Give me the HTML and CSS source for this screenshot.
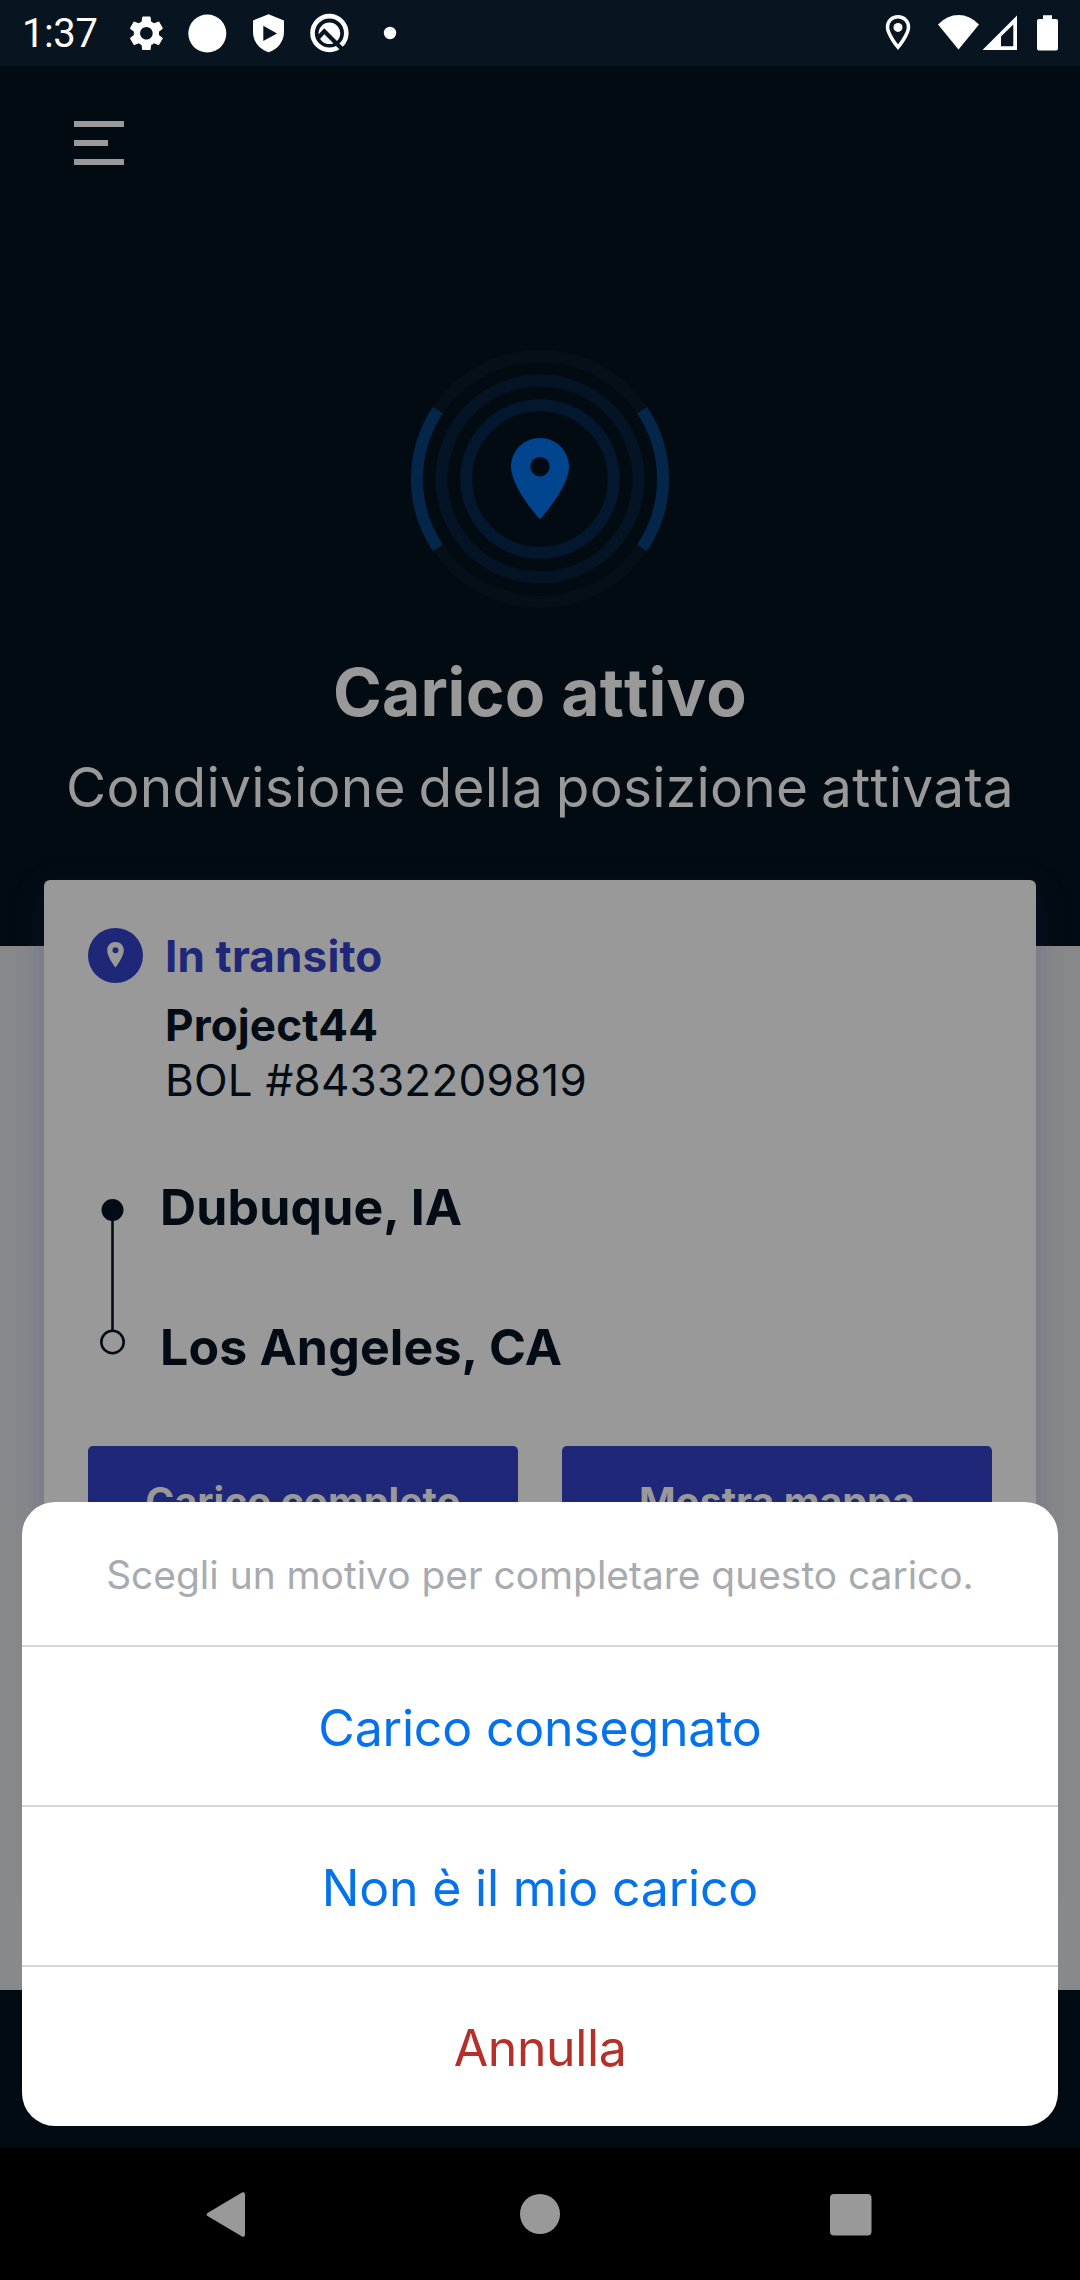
FILE: index.html
```html
<!DOCTYPE html>
<html lang="it">
<head>
<meta charset="utf-8">
<title>Carico attivo</title>
<link rel="stylesheet" href="styles.css">
</head>
<body>
<div class="screen">
  <header class="status">
    <span class="clock">1:37</span>
    <svg class="status-left" viewBox="120 0 300 66" width="300" height="66" fill="#fff">
      <path transform="translate(125.4 12.3) scale(1.75)" d="M19.14 12.94c.04-.3.06-.61.06-.94 0-.32-.02-.64-.07-.94l2.03-1.58c.18-.14.23-.41.12-.61l-1.92-3.32c-.12-.22-.37-.29-.59-.22l-2.39.96c-.5-.38-1.03-.7-1.62-.94l-.36-2.54c-.04-.24-.24-.41-.48-.41h-3.84c-.24 0-.43.17-.47.41l-.36 2.54c-.59.24-1.13.57-1.62.94l-2.39-.96c-.22-.08-.47 0-.59.22L2.74 8.87c-.12.21-.08.47.12.61l2.03 1.58c-.05.3-.09.63-.09.94s.02.64.07.94l-2.03 1.58c-.18.14-.23.41-.12.61l1.92 3.32c.12.22.37.29.59.22l2.39-.96c.5.38 1.03.7 1.62.94l.36 2.54c.05.24.24.41.48.41h3.84c.24 0 .44-.17.47-.41l.36-2.54c.59-.24 1.13-.56 1.62-.94l2.39.96c.22.08.47 0 .59-.22l1.92-3.32c.12-.22.07-.47-.12-.61l-2.01-1.58zM12 15.6c-1.98 0-3.6-1.62-3.6-3.6s1.62-3.6 3.6-3.6 3.6 1.62 3.6 3.6-1.62 3.6-3.6 3.6z"/>
      <circle cx="207.3" cy="33.5" r="19"/>
      <path fill-rule="evenodd" d="M268.500 14.300L284 20.500V32C284 41.500 277.500 49.500 268.500 52.300C259.500 49.500 253 41.500 253 32V20.500ZM263.300 25.800V41L277 33.400Z"/>
      <circle cx="329.400" cy="33" r="16.900" fill="none" stroke="#fff" stroke-width="4.600"/>
      <circle cx="329.400" cy="33.300" r="10.800"/>
      <path d="M318.500 37.500L324.300 31.200L343 50" fill="none" stroke="#081520" stroke-width="4.200"/>
      <circle cx="390" cy="33" r="6.200"/>
    </svg>
    <svg class="status-right" viewBox="880 0 200 66" width="200" height="66" fill="#fff">
      <path d="M898 16.800C891.600 16.800 887.500 21.600 887.500 27.300C887.500 34.500 898 47.200 898 47.200S908.500 34.500 908.500 27.300C908.500 21.600 904.400 16.800 898 16.800Z" fill="none" stroke="#fff" stroke-width="3.500"/>
      <circle cx="898" cy="27.400" r="4.500"/>
      <path d="M938 24.500Q947 15 958.500 15T979 24.500L958.500 49.500Z"/>
      <path fill-rule="evenodd" d="M1017 15.500V50H982.500ZM1013.300 24.500L1001 36.500V46.300H1013.300Z"/>
      <path d="M1043 15.300H1052V19H1056Q1058 19 1058 21V48.500Q1058 50.500 1056 50.500H1039Q1037 50.500 1037 48.500V21Q1037 19 1039 19H1043Z"/>
    </svg>
  </header>

  <section class="hero">
    <div class="menu"><i></i><i class="short"></i><i></i></div>
    <svg class="radar" viewBox="-130 -130 260 260" width="260" height="260" fill="none" stroke-width="12">
      <circle r="123" stroke="#040f18"/>
      <circle r="98.500" stroke="#041425"/>
      <circle r="73.800" stroke="#03182f"/>
      <path d="M-102 -68.800A123 123 0 0 0 -102 68.800M102 -68.800A123 123 0 0 1 102 68.800" stroke="#04264a"/>
      <path fill="#00458e" fill-rule="evenodd" d="M0 -41C-16 -41 -29 -28.300 -29 -12.500C-29 8.900 0 40.300 0 40.300S29 8.900 29 -12.500C29 -28.300 16 -41 0 -41ZM0 -22A9.700 9.700 0 1 1 0 -2.600A9.700 9.700 0 1 1 0 -22Z"/>
    </svg>
    <h1>Carico attivo</h1>
    <p>Condivisione della posizione attivata</p>
  </section>

  <main class="body">
    <article class="card">
      <div class="load">
        <svg width="55" height="55" viewBox="0 0 55 55"><circle cx="27.500" cy="27.500" r="27.500" fill="#1e2778"/><path fill="#999" fill-rule="evenodd" d="M27.500 14C22.800 14 19.200 17.500 19.200 22.200C19.200 29 27.500 39.500 27.500 39.500S35.800 29 35.800 22.200C35.800 17.500 32.200 14 27.500 14ZM27.500 19.200A3 3 0 1 1 27.500 25.200A3 3 0 1 1 27.500 19.200Z"/></svg>
        <div class="load-text">
          <div class="state">In transito</div>
          <div class="company">Project44</div>
          <div class="bol">BOL #84332209819</div>
        </div>
      </div>
      <div class="route">
        <svg width="26" height="170" viewBox="0 0 26 170"><g stroke="#030c14" stroke-width="2.600" fill="none"><circle cx="12.500" cy="15" r="9.700" fill="#030c14"/><path d="M12.500 15V135.500"/><circle cx="12.500" cy="147" r="11.200"/></g></svg>
        <div class="stops"><div>Dubuque, IA</div><div>Los Angeles, CA</div></div>
      </div>
      <div class="actions"><button>Carico completo</button><button>Mostra mappa</button></div>
    </article>
  </main>
  <div class="tabbar"></div>

  <nav class="nav">
    <svg width="1080" height="132" viewBox="0 2148 1080 132" fill="#999">
      <path d="M207.500 2213Q205.500 2214.500 207.500 2216L242 2236.500Q245 2237.500 245 2234.500V2194.500Q245 2191.500 242 2192.500Z"/>
      <circle cx="540" cy="2214" r="20"/>
      <rect x="830" y="2194" width="41.500" height="41.500" rx="4"/>
    </svg>
  </nav>

  <div class="sheet">
    <div class="sheet-title">Scegli un motivo per completare questo carico.</div>
    <div class="option">Carico consegnato</div>
    <div class="option">Non è il mio carico</div>
    <div class="option cancel">Annulla</div>
  </div>
</div>
</body>
</html>
```
FILE: styles.css
```css
* { box-sizing: border-box; }
body { margin: 0; background: #000; font-family: Inter, sans-serif; }
svg { display: block; flex: none; }
.screen { position: relative; width: 1080px; height: 2280px; display: flex; flex-direction: column; overflow: hidden; }

.status { height: 66px; background: #081520; display: flex; color: #fff; }
.clock { width: 120px; padding-left: 22px; font: 40px/68px Roboto, sans-serif; letter-spacing: -.4px; }
.status-right { margin-left: auto; }

.hero { height: 880px; background: #030b12; color: #999; display: flex; flex-direction: column; align-items: center; font-kerning: none; }
.menu { align-self: flex-start; margin: 55px 0 0 74px; height: 44px; display: flex; flex-direction: column; justify-content: space-between; }
.menu i { width: 50px; height: 6px; background: #999; }
.menu .short { width: 34px; }
.radar { margin-top: 184px; }
.hero h1 { margin: 43px 0 0; font-size: 66px; line-height: 80px; font-weight: 700; letter-spacing: .2px; white-space: nowrap; }
.hero p { margin: 22px 0 0; font-size: 55px; line-height: 66px; letter-spacing: .25px; word-spacing: -3px; white-space: nowrap; }

.body { height: 1044px; padding: 0 44px; background: #88898b; }
.card { position: relative; margin-top: -66px; height: 1000px; padding: 48px 44px 0; border-radius: 6px; background: #999; color: #030c14; box-shadow: 0 11px 33px rgba(30, 39, 120, .22); }
.load { display: flex; gap: 22px; }
.load-text { padding-top: 1px; font-size: 44px; line-height: 55px; letter-spacing: .15px; white-space: nowrap; }
.state { font-weight: 700; color: #1e2778; margin-bottom: 14px; }
.company { font-weight: 700; }
.bol { letter-spacing: .2px; }
.route { display: flex; gap: 34px; height: 251px; margin: 87px 0 0 12px; }
.stops { margin-top: -18px; font-size: 50px; line-height: 60px; font-weight: 700; letter-spacing: .15px; display: grid; row-gap: 80px; white-space: nowrap; align-content: start; }
.actions { display: flex; gap: 44px; }
.actions button { flex: 1; height: 110px; border: 0; border-radius: 5px; padding: 2px 0 0; background: #1e2778; color: #999; font: 700 39.3px/48px Inter, sans-serif; }

.tabbar { height: 158px; background: #030b12; }
.nav { height: 132px; background: #000; }

.sheet { position: absolute; left: 22px; right: 22px; bottom: 154px; height: 624px; border-radius: 33px; background: #fff; text-align: center; white-space: nowrap; }
.sheet-title { height: 143px; font-size: 38.9px; line-height: 145px; color: #a7abb0; }
.option { height: 160px; border-top: 2px solid #d5d6d7; font-size: 50px; line-height: 162px; letter-spacing: -.2px; color: #0572ed; }
.cancel { color: #b5302b; letter-spacing: -.4px; }
```
